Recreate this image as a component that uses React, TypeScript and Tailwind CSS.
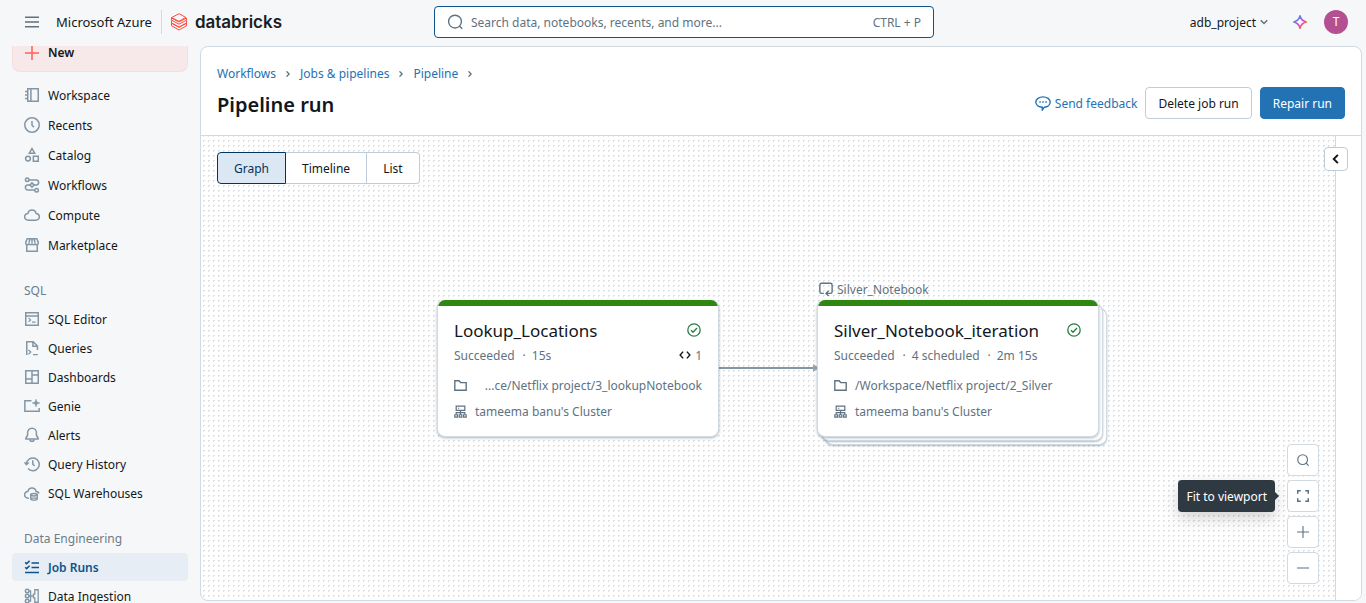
import { Fragment, type ReactNode } from 'react';

function Icon({ children, className = 'size-4', width = 1.5 }: { children: ReactNode; className?: string; width?: number }) {
  return (
    <svg viewBox="0 0 16 16" fill="none" stroke="currentColor" strokeWidth={width} className={`shrink-0 ${className}`} aria-hidden="true">
      {children}
    </svg>
  );
}

const icons: Record<string, ReactNode> = {
  Workspace: <path d="M3.75 1.75h10.5v12.5H3.75zM6.9 1.75v12.5M1 4.5h2.75M1 8h2.75M1 11.5h2.75" />,
  Recents: (
    <>
      <circle cx="8" cy="8" r="7.25" />
      <path d="M8 4v4.2l1.9 1.9" />
    </>
  ),
  Catalog: (
    <>
      <path d="M8 1.6 10.7 6.2H5.3z" />
      <circle cx="4" cy="11.6" r="2.4" />
      <path d="M9.35 9.35h4.9v4.9h-4.9z" />
    </>
  ),
  Workflows: (
    <>
      <circle cx="3.2" cy="2.8" r="1.75" />
      <circle cx="12.6" cy="13.2" r="1.75" />
      <path d="M4.9 3h7.2a2.2 2.2 0 0 1 0 5H10M6 8H3.9a2.3 2.3 0 0 0 0 5h6.9" />
      <path d="M8 5.9 10.1 8 8 10.1 5.9 8z" />
    </>
  ),
  Compute: <path d="M4.2 13.2a3.4 3.4 0 0 1-.3-6.8 4.2 4.2 0 0 1 8.2 0 3.4 3.4 0 0 1-.3 6.8z" />,
  Marketplace: (
    <>
      <path d="M2.75 8v6.25h10.5V8" />
      <path d="M3.2 1.75h9.6l1.4 3.5v.9a1.55 1.55 0 0 1-3.1 0 1.55 1.55 0 0 1-3.1 0 1.55 1.55 0 0 1-3.1 0 1.55 1.55 0 0 1-3.1 0v-.9zM6 2 4.9 5.8M10 2l1.1 3.8M8 2v3.8" />
    </>
  ),
  'SQL Editor': (
    <>
      <path d="M1.75 1.75h12.5v12.5H1.75zM1.75 4.9h12.5" />
      <path d="m4.6 7 2 1.9-2 1.9M8 11.1h3.6" strokeWidth="1.2" />
    </>
  ),
  Queries: (
    <>
      <path d="M2.75 15V1.75h6.5l4.2 4.2V10M8.9 1.9v4.4h4.4" />
      <path d="m4.4 9.9 2.3 2.2-2.3 2.2M9 14.6h4.8" strokeWidth="1.3" />
    </>
  ),
  Dashboards: <path d="M1.75 1.75h12.5v12.5H1.75zM8 1.75v12.5M1.75 10H8M8 6h6.25" />,
  Genie: (
    <>
      <path d="M7.5 2.75H.85v10.5h14.3V10" />
      <path d="M12 1.2 13 4l2.8 1L13 6l-1 2.8L11 6 8.2 5 11 4z" fill="currentColor" stroke="currentColor" strokeWidth="0.5" />
    </>
  ),
  Alerts: (
    <>
      <path d="M8 1.2a4.4 4.4 0 0 0-4.4 4.4v2.6L1.9 11v.9h12.2V11l-1.7-2.8V5.6A4.4 4.4 0 0 0 8 1.2z" />
      <path d="M5.9 12.2a2.1 2.1 0 0 0 4.2 0" />
    </>
  ),
  'Query History': (
    <>
      <path d="M2.4 8A6.4 6.4 0 1 1 4 12.6" />
      <path d="m.5 6.3 1.9 2.3 2.4-2.1M8.8 4.2v4l1.8 1.8" />
    </>
  ),
  'SQL Warehouses': (
    <>
      <path d="M4.9 13.2h-.7a3.4 3.4 0 0 1-.3-6.8 4.2 4.2 0 0 1 8.2 0 3.4 3.4 0 0 1 3 1.9" />
      <ellipse cx="10" cy="9.7" rx="3.3" ry="1.2" />
      <path d="M6.7 9.8v3.9c0 .8 1.5 1.4 3.3 1.4s3.3-.6 3.3-1.4V9.8M6.7 12c0 .7 1.5 1.2 3.3 1.2s3.3-.5 3.3-1.2" strokeWidth="1.3" />
    </>
  ),
  'Job Runs': <path d="m1.2 3.4 1.4 1.4L5.6 1.9M1.2 8.2l1.4 1.4 3-2.9M7.5 4h7.5M7.5 8.5h7.5M1 13.4h14" />,
  'Data Ingestion': (
    <>
      <circle cx="3.2" cy="3" r="1.8" />
      <circle cx="3.2" cy="8" r="1.8" />
      <circle cx="3.2" cy="13" r="1.8" />
      <path d="M5 3h1.6v10H5M5 8h5M10.8 1.75h3.4v12.5h-3.4v-4.4h-1.3V6.2h1.3z" strokeWidth="1.3" />
    </>
  ),
};

function NavItem({ label, active = false }: { label: string; active?: boolean }) {
  return (
    <a
      href="#"
      aria-current={active ? 'page' : undefined}
      className={`flex h-7 items-center gap-2 rounded px-3 ${active ? 'bg-[#e6edf4] font-semibold text-[#0e538b]' : 'text-[#11171c]'}`}
    >
      <span className={active ? 'text-[#0e538b]' : 'text-[#8396a5]'}>
        <Icon>{icons[label]}</Icon>
      </span>
      {label}
    </a>
  );
}

function NavSection({ title, items }: { title: string; items: string[] }) {
  return (
    <section className="mt-[17px] flex flex-col gap-px">
      <h2 className="flex h-7 items-center px-3 text-[#6b7c8a]">{title}</h2>
      {items.map((item) => (
        <NavItem key={item} label={item} active={item === 'Job Runs'} />
      ))}
    </section>
  );
}

function Sidebar() {
  return (
    <nav className="w-[200px] shrink-0 overflow-hidden px-3" aria-label="Main">
      <button className="flex h-[26px] w-full items-center gap-2 rounded-b-lg border border-t-0 border-[#f9dcdc] bg-[#f7e9e9] px-[11px] pb-3 leading-3 font-semibold text-[#11171c]">
        <span className="text-[#ff5f57]">
          <Icon>
            <path d="M8 1v14M1 8h14" />
          </Icon>
        </span>
        New
      </button>
      <div className="mt-[9px] flex flex-col gap-0.5">
        {['Workspace', 'Recents', 'Catalog', 'Workflows', 'Compute', 'Marketplace'].map((item) => (
          <NavItem key={item} label={item} />
        ))}
      </div>
      <NavSection
        title="SQL"
        items={['SQL Editor', 'Queries', 'Dashboards', 'Genie', 'Alerts', 'Query History', 'SQL Warehouses']}
      />
      <NavSection title="Data Engineering" items={['Job Runs', 'Data Ingestion']} />
    </nav>
  );
}

function Logo() {
  return (
    <a href="#" className="flex items-center gap-2 text-[#1b1f23]" aria-label="databricks">
      <svg viewBox="0 0 16 18" className="h-[18px] w-4" fill="none" stroke="#ff4b3a" strokeWidth="1" aria-hidden="true">
        <path d="M.5 4.6 8 .7l6.8 3.7L8 8.3z" />
        <path d="M.5 4.6v2.5L8 11.2l7.5-4V5L8 9 .5 5M.5 7.4v2.5L8 14l7.5-4V7.6M.5 10.2v2.6L8 17l7.5-4.2v-2.5L8 14.3.5 10.3" />
      </svg>
      <span className="font-['Inter',sans-serif] text-[17px] font-semibold">databricks</span>
    </a>
  );
}

function TopBar() {
  return (
    <header className="grid h-[46px] shrink-0 grid-cols-[1fr_minmax(0,500px)_1fr] items-center pb-0.5 pl-0.5">
      <div className="flex items-center gap-4 pl-[22px]">
        <button aria-label="Menu" className="text-[#5f7281]">
          <Icon>
            <path d="M1 3.2h14M1 8h14M1 12.8h14" />
          </Icon>
        </button>
        <div className="flex items-center gap-[9px]">
          <span className="text-[13px] whitespace-nowrap">Microsoft Azure</span>
          <span className="h-6 w-px bg-[#d1d9e1]" />
          <Logo />
        </div>
      </div>
      <label className="flex h-8 items-center gap-2 rounded border border-[#0e538b] bg-white px-3 text-[#5f7281]">
        <Icon width={1.4}>
          <circle cx="8" cy="7.6" r="6.4" />
          <path d="m12.4 12 2.8 2.8" />
        </Icon>
        <input
          aria-label="Search"
          placeholder="Search data, notebooks, recents, and more..."
          className="min-w-0 flex-1 bg-transparent outline-none placeholder:text-[#5f7281] placeholder:opacity-100"
        />
        <span>CTRL + P</span>
      </label>
      <div className="flex items-center justify-end pr-[18px]">
        <button className="flex items-center gap-1">
          adb_project
          <Icon className="size-2 text-[#5f7281]" width={3}>
            <path d="m1.5 4.5 6.5 6.5 6.5-6.5" />
          </Icon>
        </button>
        <button aria-label="Assistant" className="mr-4 ml-6">
          <svg viewBox="0 0 16 16" className="size-4" fill="none" aria-hidden="true">
            <defs>
              <linearGradient id="spark" x1="2" y1="2" x2="14" y2="14" gradientUnits="userSpaceOnUse">
                <stop offset="0.2" stopColor="#4299e0" />
                <stop offset="0.5" stopColor="#ca42e0" />
                <stop offset="0.8" stopColor="#ff5f46" />
              </linearGradient>
            </defs>
            <path
              d="M8 1.8c.9 3.6 2.6 5.3 6.2 6.2-3.6.9-5.3 2.6-6.2 6.2C7.1 10.6 5.4 8.9 1.8 8 5.4 7.1 7.1 5.4 8 1.8z"
              stroke="url(#spark)"
              strokeWidth="1.6"
              strokeLinejoin="round"
            />
          </svg>
        </button>
        <button aria-label="Account" className="size-6 rounded-full bg-[#b45091] text-xs text-white">
          T
        </button>
      </div>
    </header>
  );
}

function Crumb({ label }: { label: string }) {
  return (
    <li className="flex items-center gap-[9px]">
      <a href="#" className="text-[#2272b4]">
        {label}
      </a>
      <Icon className="size-1.5 text-[#5f7281]" width={3.5}>
        <path d="m4 1 7 7-7 7" />
      </Icon>
    </li>
  );
}

function PageHeader() {
  return (
    <div className="flex h-[89px] shrink-0 items-end justify-between border-b border-[#d1d9e1] px-4 pb-4">
      <div>
        <ol className="flex gap-[9px] leading-[19px]">
          <Crumb label="Workflows" />
          <Crumb label="Jobs & pipelines" />
          <Crumb label="Pipeline" />
        </ol>
        <h1 className="mt-2 text-xl leading-7 font-semibold">Pipeline run</h1>
      </div>
      <div className="flex items-center gap-2">
        <a href="#" className="flex items-center gap-1 text-[#2272b4]">
          <Icon width={1.4}>
            <path d="M8 1.9c4 0 7.2 2.3 7.2 5.2 0 2.8-2.7 4.9-5.8 5.1L7.3 15v-2.8C3.7 12 .8 9.9.8 7.1.8 4.2 4 1.9 8 1.9z" />
            <path d="M4.3 7h1.5M7.3 7h1.5M10.3 7h1.5" />
          </Icon>
          Send feedback
        </a>
        <button className="h-8 rounded border border-[#c0cdd8] bg-white px-3">Delete job run</button>
        <button className="h-8 rounded border border-[#2272b4] bg-[#2272b4] px-3 text-white">Repair run</button>
      </div>
    </div>
  );
}

type Task = { title: string; status: string[]; count?: string; path: string; cluster: string };

function TaskCard({ title, status, count, path, cluster }: Task) {
  return (
    <article className="relative overflow-hidden rounded-lg border border-t-0 border-[#d1d9e1] bg-white whitespace-nowrap shadow-[0_1px_3px_rgba(60,90,120,0.45)]">
      <div className="h-1.5 bg-[#308613]" />
      <div className="px-4 pt-3 pb-[13px] text-[#5f7281]">
        <div className="flex h-6 items-center justify-between">
          <h3 className="text-[17px] text-[#11171c]">{title}</h3>
          <Icon className="size-4 text-[#277c43]" width={1.3}>
            <circle cx="8" cy="8" r="6.2" />
            <path d="m5 8.3 2 2 4-4.3" />
          </Icon>
        </div>
        <div className="mt-px flex h-6 items-center justify-between">
          <span>
            {status.map((part, i) => (
              <Fragment key={part}>
                {i > 0 && <span className="mr-1.5 ml-2">·</span>}
                {part}
              </Fragment>
            ))}
          </span>
          {count && (
            <span className="flex items-center gap-1">
              <Icon className="size-3 text-[#11171c]" width={1.9}>
                <path d="M5.5 3.5 1.5 8l4 4.5M10.5 3.5l4 4.5-4 4.5" />
              </Icon>
              {count}
            </span>
          )}
        </div>
        <div className="mt-1.5 flex h-6 items-center gap-2">
          <Icon className="size-[13px]" width={1.7}>
            <path d="M1 2.2h5.2l2 2.2H15v9.4H1z" />
          </Icon>
          <span className={count ? 'flex-1 text-right' : ''}>{path}</span>
        </div>
        <div className="mt-0.5 flex h-6 items-center gap-2">
          <Icon className="size-[13px]" width={1.5}>
            <path d="M2.7 1.5h10.6v5H2.7zM5 4h1.5M8 6.5V12M2.7 11.5V9.3h10.6v2.2" />
            <path d="M1 12h3.2v3H1zM6.4 12h3.2v3H6.4zM11.8 12H15v3h-3.2z" />
          </Icon>
          {cluster}
        </div>
      </div>
    </article>
  );
}

function ZoomButton({ label, children }: { label: string; children: ReactNode }) {
  return (
    <button
      aria-label={label}
      className="flex size-8 items-center justify-center rounded border border-[#d1d9e1] bg-white text-[#5f7281]"
    >
      <Icon className="size-3" width={1.5}>
        {children}
      </Icon>
    </button>
  );
}

function ZoomControls() {
  return (
    <div className="absolute right-4 bottom-4 flex flex-col gap-1">
      <ZoomButton label="Search">
        <circle cx="7.5" cy="7.5" r="6.5" />
        <path d="m12 12 3.5 3.5" />
      </ZoomButton>
      <div className="relative">
        <ZoomButton label="Fit to viewport">
          <path d="M1 5V1h4M11 1h4v4M15 11v4h-4M5 15H1v-4" strokeWidth="2" />
        </ZoomButton>
        <div
          role="tooltip"
          className="absolute top-0 right-full mr-3 flex h-8 items-center rounded bg-[#2f3941] px-2 whitespace-nowrap text-white shadow-[0_6px_16px_rgba(0,0,0,0.18)]"
        >
          Fit to viewport
          <svg viewBox="0 0 4 8" className="absolute top-3 left-full h-2 w-1" aria-hidden="true">
            <path d="M0 0l4 4-4 4z" fill="#2f3941" />
          </svg>
        </div>
      </div>
      <ZoomButton label="Zoom in">
        <path d="M8 0v16M0 8h16" />
      </ZoomButton>
      <ZoomButton label="Zoom out">
        <path d="M0 8h16" />
      </ZoomButton>
    </div>
  );
}

function Canvas() {
  return (
    <div className="relative flex-1 bg-[radial-gradient(circle,#dde1e4_1px,transparent_1px)] bg-[size:5px_5px] bg-[position:0_2px] p-4">
      <div className="inline-flex h-8" role="group" aria-label="View">
        <button aria-pressed="true" className="rounded-l border border-[#04355d] bg-[#dbe7f3] px-4 text-[#04355d]">
          Graph
        </button>
        <button className="border-y border-r border-[#c0cdd8] bg-white px-4">Timeline</button>
        <button className="rounded-r border-y border-r border-[#c0cdd8] bg-white px-4">List</button>
      </div>

      <svg className="absolute top-[228px] left-[517px] h-2 w-[101px]" viewBox="0 0 101 8" aria-hidden="true">
        <path d="M0 4h95" stroke="#8396a5" strokeWidth="2" />
        <path d="M95 0l6 4-6 4z" fill="#9aa5b0" />
      </svg>

      <div className="absolute top-[164px] left-[236px] w-[282px]">
        <TaskCard
          title="Lookup_Locations"
          status={['Succeeded', '15s']}
          count="1"
          path="...ce/Netflix project/3_lookupNotebook"
          cluster="tameema banu's Cluster"
        />
      </div>

      <div className="absolute top-[164px] left-[616px] w-[282px]">
        <div className="absolute -top-[21px] left-0.5 flex h-5 items-center gap-1 text-[#5f7281]">
          <Icon className="size-3.5" width={1.6}>
            <path d="M5.5 13H3a2 2 0 0 1-2-2V3.5a2 2 0 0 1 2-2h10a2 2 0 0 1 2 2V11a2 2 0 0 1-2 2H8.5M11 10l-3 3 3 3" />
          </Icon>
          Silver_Notebook
        </div>
        <div className="absolute inset-0 translate-x-2 translate-y-2 rounded-lg border border-[#d1d9e1] bg-white shadow-[0_1px_2px_rgba(60,90,120,0.4)]" />
        <div className="absolute inset-0 translate-x-1 translate-y-1 rounded-lg border border-[#d1d9e1] bg-white shadow-[0_1px_2px_rgba(60,90,120,0.4)]" />
        <TaskCard
          title="Silver_Notebook_iteration"
          status={['Succeeded', '4 scheduled', '2m 15s']}
          path="/Workspace/Netflix project/2_Silver"
          cluster="tameema banu's Cluster"
        />
      </div>

      <ZoomControls />
    </div>
  );
}

export default function App() {
  return (
    <div className="flex h-screen flex-col overflow-hidden bg-[#f6f7f9] font-['Noto_Sans','Open_Sans',sans-serif] text-xs/[17px] text-[#11171c]">
      <TopBar />
      <div className="flex min-h-0 flex-1">
        <Sidebar />
        <main className="mr-1 mb-0.5 flex min-w-0 flex-1 flex-col overflow-hidden rounded-lg border border-[#d1d9e1] bg-white">
          <PageHeader />
          <div className="flex min-h-0 flex-1">
            <Canvas />
            <aside className="relative w-[26px] shrink-0 border-l border-[#d1d9e1] bg-white">
              <button
                aria-label="Expand details"
                className="absolute top-[11px] -left-3 flex size-6 items-center justify-center rounded border border-[#c0cdd8] bg-white"
              >
                <Icon className="size-3" width={2.6}>
                  <path d="M10.5 2.5 5 8l5.5 5.5" />
                </Icon>
              </button>
            </aside>
          </div>
        </main>
      </div>
    </div>
  );
}
